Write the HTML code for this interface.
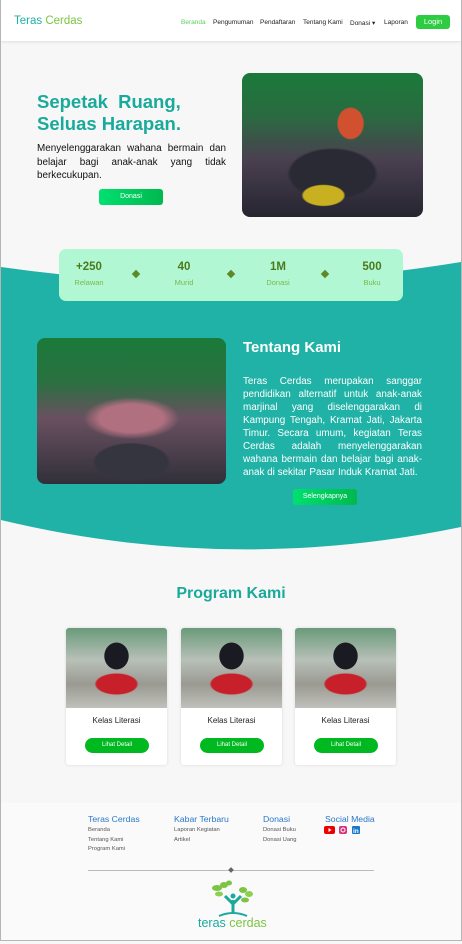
<!DOCTYPE html>
<html><head><meta charset="utf-8"><style>
*{margin:0;padding:0;box-sizing:border-box}
body{width:462px;height:944px;background:#f7f7f7;font-family:"Liberation Sans",sans-serif;position:relative;overflow:hidden}
.frame{position:absolute;left:0;top:0;width:462px;height:941px;border:1px solid #b5b5b5;border-top:none;}
.abs{position:absolute}
nav{position:absolute;left:1px;top:0;width:460px;height:41px;background:#fff;box-shadow:0 1px 3px rgba(0,0,0,.1)}
nav .logo{position:absolute;left:13px;top:15px;font-size:11.5px;color:#1fb2a6}
nav .logo span{color:#7cc442}
nav .links{position:absolute;top:19px;font-size:6.5px;color:#222}
.login{position:absolute;left:415px;top:15px;width:34px;height:14px;background:#2ecc40;border-radius:3px;color:#fff;font-size:7.5px;text-align:center;line-height:14px}
.photo{border-radius:8px;overflow:hidden}
.btn{position:absolute;border-radius:3px;color:#fff;font-size:7px;text-align:center;background:linear-gradient(90deg,#00e070,#00b84e)}
.stat{position:absolute;text-align:center;width:60px}
.stat b{display:block;font-size:11.5px;color:#4a7a1a}
.stat i{display:block;font-style:normal;font-size:7.5px;color:#7ab84a;margin-top:5px}
.dia{position:absolute;width:6px;height:6px;background:#5d8a22;transform:rotate(45deg);top:271px}
.card{position:absolute;top:628px;width:101px;height:137px;background:#fff;border-radius:3px;box-shadow:0 0 3px rgba(0,0,0,.12);overflow:hidden}
.card .img{height:80px;background:radial-gradient(ellipse 20px 22px at 50% 35%,#1a1a22 60%,transparent 62%),radial-gradient(ellipse 40px 20px at 50% 70%,#c8202a 50%,transparent 55%),linear-gradient(180deg,#6a9a7a 0%,#b8c0b8 40%,#9a9a92 70%,#c0c0bc 100%)}
.card .t{text-align:center;font-size:8px;color:#222;margin-top:8px}
.card .lb{position:absolute;left:19px;top:110px;width:64px;height:15px;background:#00b820;border-radius:8px;color:#fff;font-size:6px;text-align:center;line-height:15px}
.fh{position:absolute;top:814px;font-size:8.7px;color:#2a78c8}
.fl{position:absolute;font-size:5.8px;color:#555;line-height:9.5px}
</style></head><body>
<svg class="abs" style="left:0;top:0" width="462" height="944">
<path d="M1 267 Q230 300 461 262 L461 527 Q230 575 1 520 Z" fill="#20b2a6"/>
</svg>
<nav>
<div class="logo">Teras <span>Cerdas</span></div>
<div class="links" style="left:180px;color:#5ad05a">Beranda</div>
<div class="links" style="left:212px">Pengumuman</div>
<div class="links" style="left:259px">Pendaftaran</div>
<div class="links" style="left:302px">Tentang Kami</div>
<div class="links" style="left:349px">Donasi ▾</div>
<div class="links" style="left:383px">Laporan</div>
<div class="login">Login</div>
</nav>
<div class="abs" style="left:37px;top:91px;font-size:18.5px;font-weight:bold;color:#1aaa9c;line-height:22px;word-spacing:5px">Sepetak Ruang,<br><span style="word-spacing:0">Seluas Harapan.</span></div>
<div class="abs" style="left:37px;top:142px;width:189px;font-size:9.9px;color:#111;line-height:13.5px;text-align:justify">Menyelenggarakan wahana bermain dan belajar bagi anak-anak yang tidak berkecukupan.</div>
<div class="btn" style="left:99px;top:189px;width:64px;height:16px;line-height:16px">Donasi</div>
<div class="abs photo" style="left:242px;top:73px;width:181px;height:144px;background:radial-gradient(ellipse 40px 20px at 45% 85%,#c8b020 50%,transparent 55%),radial-gradient(ellipse 70px 40px at 50% 70%,#2a2a35 60%,transparent 65%),radial-gradient(ellipse 25px 30px at 60% 35%,#d05030 50%,transparent 55%),linear-gradient(180deg,#1a7a3a 0%,#2a6a40 30%,#4a4050 60%,#252530 100%)"></div>
<div class="abs" style="left:59px;top:249px;width:344px;height:52px;background:#b2f7d4;border-radius:7px"></div>
<div class="stat" style="left:59px;top:261px"><b>+250</b><i>Relawan</i></div>
<div class="stat" style="left:154px;top:261px"><b>40</b><i>Murid</i></div>
<div class="stat" style="left:248px;top:261px"><b>1M</b><i>Donasi</i></div>
<div class="stat" style="left:342px;top:261px"><b>500</b><i>Buku</i></div>
<div class="dia" style="left:133px"></div>
<div class="dia" style="left:228px"></div>
<div class="dia" style="left:322px"></div>
<div class="abs photo" style="left:37px;top:338px;width:189px;height:146px;background:radial-gradient(ellipse 60px 30px at 50% 85%,#353540 60%,transparent 65%),radial-gradient(ellipse 80px 35px at 50% 55%,#b07080 40%,transparent 60%),linear-gradient(180deg,#1a7a3a 0%,#2a7040 30%,#6a5060 55%,#303038 100%)"></div>
<div class="abs" style="left:243px;top:339px;font-size:15px;font-weight:bold;color:#fff">Tentang Kami</div>
<div class="abs" style="left:243px;top:375px;width:179px;font-size:9.9px;color:#fff;line-height:13px;text-align:justify">Teras Cerdas merupakan sanggar pendidikan alternatif untuk anak-anak marjinal yang diselenggarakan di Kampung Tengah, Kramat Jati, Jakarta Timur. Secara umum, kegiatan Teras Cerdas adalah menyelenggarakan wahana bermain dan belajar bagi anak-anak di sekitar Pasar Induk Kramat Jati.</div>
<div class="btn" style="left:293px;top:489px;width:64px;height:16px;line-height:16px">Selengkapnya</div>
<div class="abs" style="left:0;width:462px;top:585px;text-align:center;font-size:16px;font-weight:bold;color:#1aaa9c">Program Kami</div>
<div class="card" style="left:66px"><div class="img"></div><div class="t">Kelas Literasi</div><div class="lb">Lihat Detail</div></div>
<div class="card" style="left:181px"><div class="img"></div><div class="t">Kelas Literasi</div><div class="lb">Lihat Detail</div></div>
<div class="card" style="left:295px"><div class="img"></div><div class="t">Kelas Literasi</div><div class="lb">Lihat Detail</div></div>
<div class="abs" style="left:1px;top:803px;width:460px;height:138px;background:#fafafa"></div>
<div class="fh" style="left:88px">Teras Cerdas</div>
<div class="fl" style="left:88px;top:826px">Beranda<br>Tentang Kami<br>Program Kami</div>
<div class="fh" style="left:174px">Kabar Terbaru</div>
<div class="fl" style="left:174px;top:826px">Laporan Kegiatan<br>Artikel</div>
<div class="fh" style="left:263px">Donasi</div>
<div class="fl" style="left:263px;top:826px">Donasi Buku<br>Donasi Uang</div>
<div class="fh" style="left:325px">Social Media</div>
<svg class="abs" style="left:324px;top:825px" width="40" height="10">
<rect x="0" y="1" width="11" height="8" rx="2" fill="#e00"/><path d="M4.5 3 L7.5 5 L4.5 7Z" fill="#fff"/>
<rect x="15" y="1" width="8" height="8" rx="2" fill="#d8307a"/><circle cx="19" cy="5" r="2" fill="none" stroke="#fff" stroke-width="1"/>
<rect x="28" y="1" width="8" height="8" rx="1" fill="#1a78c8"/><text x="29" y="8" font-size="6.5" font-weight="bold" fill="#fff" font-family="Liberation Sans">in</text>
</svg>
<div class="abs" style="left:88px;top:870px;width:286px;height:1px;background:#bbb"></div>
<div class="abs" style="left:229px;top:868px;width:4px;height:4px;background:#666;transform:rotate(45deg)"></div>
<svg class="abs" style="left:205px;top:880px" width="56" height="40">
<path d="M28 34 L28 20 M28 24 L20 16 M28 24 L36 16" stroke="#1aaa9c" stroke-width="3" fill="none"/>
<circle cx="28" cy="16" r="2.5" fill="#1aaa9c"/>
<path d="M14 36 Q28 30 42 36" stroke="#1aaa9c" stroke-width="2" fill="none"/>
<ellipse cx="12" cy="8" rx="5" ry="3" fill="#7cc442"/><ellipse cx="19" cy="5" rx="4" ry="3" fill="#7cc442"/><ellipse cx="14" cy="14" rx="4" ry="2.5" fill="#8cd050"/>
<ellipse cx="24" cy="3" rx="3" ry="2.5" fill="#7cc442"/>
<ellipse cx="38" cy="10" rx="4" ry="3" fill="#7cc442"/><ellipse cx="44" cy="14" rx="4" ry="3" fill="#8cd050"/><ellipse cx="40" cy="20" rx="4" ry="2.5" fill="#7cc442"/>
</svg>
<div class="abs" style="left:198px;top:916px;font-size:12.5px;color:#1aaa9c">teras <span style="color:#7cc442">cerdas</span></div>
<div class="frame"></div>
</body></html>
